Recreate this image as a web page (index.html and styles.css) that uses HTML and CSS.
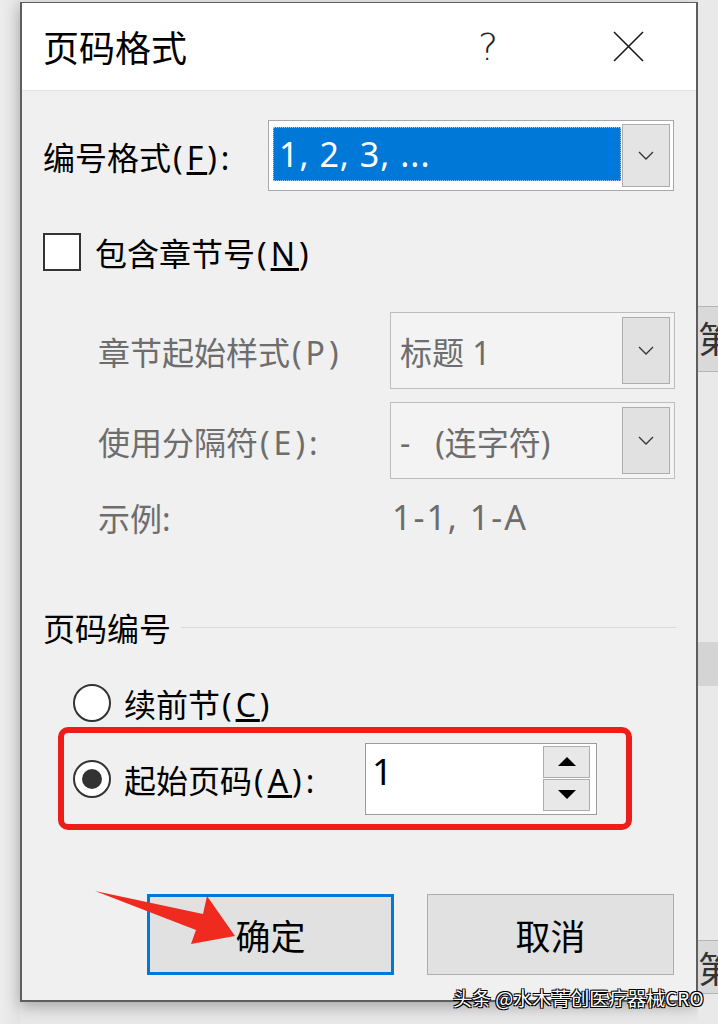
FILE: index.html
```html
<!DOCTYPE html>
<html lang="zh-CN">
<head>
    <meta charset="UTF-8" />
    <meta name="viewport" content="width=device-width, initial-scale=1.0" />
    <title>页码格式</title>
    <link rel="stylesheet" href="styles.css">
</head>
<body>

<div class="screen">
    <div class="gutter"></div>

    <div class="dialog">
        <div class="titlebar">
            <span class="title">页码格式</span>
            <span class="help">?</span>
            <span class="close">
                <svg width="31" height="31" viewBox="0 0 31 31">
                    <path d="M1 1 L30 30 M30 1 L1 30" stroke="#1a1a1a" stroke-width="1.6" fill="none" />
                </svg>
            </span>
        </div>

        <div class="content">
            <div class="row row-format">
                <span class="label label-format">编号格式<span class="en">(<u>F</u>):</span></span>
                <div class="combo combo-main">
                    <div class="combo-value">1, 2, 3, ...</div>
                    <div class="combo-btn">
                        <svg width="16" height="9" viewBox="0 0 16 9"><polyline points="1,1 8,8 15,1" stroke="#333" stroke-width="1.3" fill="none" /></svg>
                    </div>
                </div>
            </div>

            <div class="row row-check">
                <span class="checkbox"></span>
                <span class="label check-text">包含章节号<span class="en">(<u>N</u>)</span></span>
            </div>

            <div class="row row-chapter">
                <span class="label label-sub disabled">章节起始样式<span class="en">(P)</span></span>
                <div class="combo combo-off">
                    <div class="combo-value">标题 1</div>
                    <div class="combo-btn">
                        <svg width="16" height="9" viewBox="0 0 16 9"><polyline points="1,1 8,8 15,1" stroke="#333" stroke-width="1.3" fill="none" /></svg>
                    </div>
                </div>
            </div>

            <div class="row row-sep">
                <span class="label label-sub disabled">使用分隔符<span class="en">(E):</span></span>
                <div class="combo combo-off">
                    <div class="combo-value">-&nbsp;&nbsp;&nbsp;(连字符)</div>
                    <div class="combo-btn">
                        <svg width="16" height="9" viewBox="0 0 16 9"><polyline points="1,1 8,8 15,1" stroke="#333" stroke-width="1.3" fill="none" /></svg>
                    </div>
                </div>
            </div>

            <div class="row row-example">
                <span class="label label-sub disabled">示例:</span>
                <span class="label disabled example-value">1-1, 1-A</span>
            </div>

            <div class="group-head">
                <span class="label">页码编号</span>
                <span class="rule"></span>
            </div>

            <div class="row row-radio">
                <span class="radio"></span>
                <span class="label radio-text">续前节<span class="en">(<u>C</u>)</span></span>
            </div>

            <div class="highlight">
                <span class="radio checked"></span>
                <span class="label radio-text start-text">起始页码<span class="en">(<u>A</u>):</span></span>
                <div class="spin">
                    <span class="spin-value">1</span>
                    <div class="spin-btns">
                        <span class="spin-btn"><i class="tri-up"></i></span>
                        <span class="spin-btn"><i class="tri-down"></i></span>
                    </div>
                </div>
            </div>

            <div class="buttons">
                <button class="btn btn-default">确定</button>
                <button class="btn">取消</button>
            </div>
        </div>
    </div>

    <div class="backdrop">
        <div class="tile tile-top">第</div>
        <div class="band"></div>
        <div class="tile tile-bottom">第</div>
    </div>

    <!-- annotation arrow -->
    <svg class="arrow" width="150" height="66" viewBox="0 0 150 66">
        <polygon points="5,6 113,29 117,11 145,51 101,59 106,45" fill="#ef2a1e" />
    </svg>

    <div class="watermark">头条 @水木菁创医疗器械CRO</div>
</div>

</body>
</html>
```

FILE: styles.css
```css
body {
    margin: 0;
    width: 718px;
    height: 1024px;
    overflow: hidden;
    background-color: #e8e8e8;
    font-family: "Noto Sans", "Noto Sans CJK SC", sans-serif;
    color: #000;
}

.screen {
    position: relative;
    display: grid;
    grid-template-columns: 20px 678px 20px;
    height: 1024px;
}

.gutter {
    background: linear-gradient(to right, #ededed, #e3e3e3);
}

/* dialog window */
.dialog {
    margin-top: 2px;
    height: 1000px;
    box-sizing: border-box;
    border: 2px solid #5e5e5e;
    border-top-width: 1px;
    background-color: #f0f0f0;
    box-shadow: 0 5px 14px rgba(0, 0, 0, 0.28);
    display: flex;
    flex-direction: column;
}

.titlebar {
    height: 87px;
    flex-shrink: 0;
    background-color: #ffffff;
    border-bottom: 1px solid #e3e3e3;
    display: flex;
    align-items: center;
}

.title {
    flex: 1;
    padding-left: 21px;
    font-size: 36px;
}

.help {
    width: 60px;
    text-align: center;
    font-family: "DejaVu Sans", sans-serif;
    font-size: 38px;
    font-weight: 300;
    color: #222;
}

.close {
    width: 60px;
    margin-left: 80px;
    margin-right: 38px;
    display: flex;
    justify-content: center;
}

.content {
    padding: 0 20px 0 21px;
}

.label {
    font-size: 32px;
    white-space: nowrap;
}

/* latin part of a label is set wider, like the UI font */
.en {
    letter-spacing: 4px;
    margin-left: 2px;
}

.disabled {
    color: #6d6d6d;
}

.row {
    display: flex;
    align-items: center;
}

.row-format {
    margin-top: 29px;
    height: 71px;
}

.label-format {
    width: 225px;
}

/* combo boxes */
.combo {
    box-sizing: border-box;
    display: flex;
    border: 1px solid #a9a9a9;
}

.combo-main {
    width: 406px;
    height: 71px;
    padding: 3px;
    background-color: #ffffff;
}

.combo-main .combo-value {
    flex: 1;
    margin: 3px 1px 6px 1px;
    padding-left: 6px;
    background-color: #0078d7;
    outline: 1px dotted #9fc6ec;
    outline-offset: -1px;
    color: #ffffff;
    font-size: 34px;
    letter-spacing: 1px;
    display: flex;
    align-items: center;
}

.combo-btn {
    width: 48px;
    box-sizing: border-box;
    border: 1px solid #adadad;
    background-color: #e4e4e4;
    display: flex;
    align-items: center;
    justify-content: center;
}

.combo-off {
    width: 285px;
    height: 77px;
    padding: 4px;
    background-color: #f3f3f3;
    border-color: #bdbdbd;
}

.combo-off .combo-value {
    flex: 1;
    padding-left: 5px;
    color: #6d6d6d;
    font-size: 32px;
    display: flex;
    align-items: center;
}

.combo-off .combo-btn {
    background-color: #e1e1e1;
}

/* checkbox */
.row-check {
    margin-top: 41px;
    height: 39px;
}

.checkbox {
    width: 38px;
    height: 38px;
    box-sizing: border-box;
    border: 2px solid #333;
    background-color: #ffffff;
}

.check-text {
    margin-left: 14px;
}

.row-chapter {
    margin-top: 41px;
    height: 77px;
}

.row-sep {
    margin-top: 13px;
    height: 77px;
}

.label-sub {
    width: 347px;
    box-sizing: border-box;
    padding-left: 55px;
}

.row-example {
    margin-top: 18px;
    height: 40px;
}

.example-value {
    padding-left: 2px;
    font-size: 34px;
    letter-spacing: 2px;
}

/* page numbering group */
.group-head {
    margin-top: 70px;
    height: 40px;
    display: flex;
    align-items: center;
}

.rule {
    flex: 1;
    height: 1px;
    margin-left: 10px;
    background-color: #d9d9d9;
}

.row-radio {
    margin-top: 37px;
    height: 38px;
    padding-left: 30px;
}

.radio {
    width: 38px;
    height: 38px;
    box-sizing: border-box;
    border: 2px solid #333;
    border-radius: 50%;
    background-color: #ffffff;
    display: flex;
    align-items: center;
    justify-content: center;
    flex-shrink: 0;
}

.radio.checked::after {
    content: "";
    width: 20px;
    height: 20px;
    border-radius: 50%;
    background-color: #333;
}

.radio-text {
    margin-left: 13px;
}

.highlight {
    margin-top: 5px;
    margin-left: 15px;
    width: 574px;
    height: 103px;
    box-sizing: border-box;
    border: 6px solid #ee1d1a;
    border-radius: 10px;
    padding-left: 9px;
    display: flex;
    align-items: center;
}

.start-text {
    width: 241px;
    flex-shrink: 0;
}

/* spin box */
.spin {
    width: 232px;
    height: 72px;
    box-sizing: border-box;
    border: 1px solid #9c9c9c;
    background-color: #ffffff;
    padding: 2px 6px 3px 6px;
    display: flex;
}

.spin-value {
    flex: 1;
    font-size: 36px;
    line-height: 52px;
}

.spin-btns {
    width: 47px;
    display: flex;
    flex-direction: column;
    gap: 1px;
}

.spin-btn {
    flex: 1;
    box-sizing: border-box;
    border: 1px solid #adadad;
    background-color: #e8e8e8;
    display: flex;
    align-items: center;
    justify-content: center;
}

.tri-up, .tri-down {
    width: 0;
    height: 0;
    border-left: 9px solid transparent;
    border-right: 9px solid transparent;
}

.tri-up {
    border-bottom: 9px solid #000;
}

.tri-down {
    border-top: 9px solid #000;
}

/* buttons */
.buttons {
    margin-top: 64px;
    padding-left: 104px;
    display: flex;
    gap: 33px;
}

.btn {
    width: 247px;
    height: 81px;
    box-sizing: border-box;
    border: 1px solid #adadad;
    background-color: #e1e1e1;
    font-family: "Noto Sans", "Noto Sans CJK SC", sans-serif;
    font-size: 35px;
    color: #000;
    padding: 0;
}

.btn-default {
    border: 3px solid #0078d7;
}

/* window behind the dialog */
.backdrop {
    background-color: #e9e9e9;
    display: flex;
    flex-direction: column;
    overflow: hidden;
}

.tile {
    background-color: #d9d9d9;
    border-top: 1px solid #b5b5b5;
    border-bottom: 1px solid #b5b5b5;
    font-family: "Noto Sans CJK SC", sans-serif;
    font-size: 36px;
    color: #333;
    line-height: 60px;
    white-space: nowrap;
}

.tile-top {
    margin-top: 306px;
    height: 64px;
}

.band {
    margin-top: 270px;
    height: 44px;
    background-color: #d4d4d4;
}

.tile-bottom {
    margin-top: 254px;
    height: 52px;
    line-height: 52px;
}

/* annotations */
.arrow {
    position: absolute;
    left: 90px;
    top: 885px;
}

.watermark {
    position: absolute;
    left: 453px;
    top: 984px;
    font-family: "Noto Sans CJK SC", sans-serif;
    font-size: 19px;
    color: #ffffff;
    white-space: nowrap;
    text-shadow: 1px 1px 0 #000, -1px -1px 0 #000, 1px -1px 0 #000, -1px 1px 0 #000;
}
```
